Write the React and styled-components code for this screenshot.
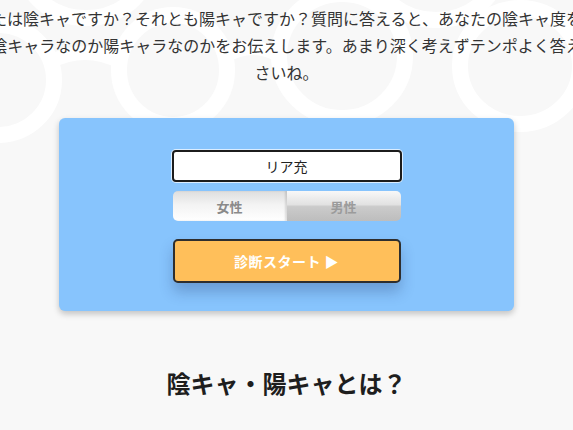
import { useState } from 'react'
import styled, { createGlobalStyle } from 'styled-components'

const GlobalStyle = createGlobalStyle`
    html, body {
        margin: 0;
        padding: 0;
        background: #f8f8f8;
        overflow-x: hidden;
    }
    body {
        font-family: "Noto Sans CJK JP", "Noto Sans", sans-serif;
        color: #333;
    }
`

const Page = styled.div`
    width: 100%;
    overflow: hidden;
`

const Hero = styled.header`
    position: relative;
    padding-top: 5px;
`

const Pattern = styled.svg`
    position: absolute;
    left: 0;
    top: 0;
    width: 100%;
    height: 150px;
    z-index: 0;
`

const Intro = styled.p`
    position: relative;
    z-index: 1;
    margin: 0;
    display: flex;
    flex-direction: column;
    align-items: center;
    font-size: 16px;
    line-height: 27px;
    color: #333;
`

const IntroLine = styled.span`
    white-space: nowrap;
`

const Card = styled.section`
    position: relative;
    z-index: 1;
    width: 455px;
    margin: 32px auto 0;
    padding: 32px 0 28px;
    box-sizing: border-box;
    background: #87c4fd;
    border-radius: 6px;
    box-shadow: 0 3px 6px rgba(0, 0, 0, 0.22);
    display: flex;
    flex-direction: column;
    align-items: center;
`

const NameInput = styled.input`
    width: 230px;
    height: 32px;
    box-sizing: border-box;
    border: 2px solid #1c1c1c;
    border-radius: 4px;
    background: #fff;
    text-align: center;
    font-family: inherit;
    font-size: 14px;
    color: #222;
    outline: none;
    caret-color: #111;
    box-shadow: 0 0 0 1px rgba(255, 255, 255, 0.7);
`

const Toggle = styled.div`
    display: flex;
    width: 228px;
    height: 30px;
    margin-top: 9px;
    border-radius: 5px;
    overflow: hidden;
`

const ToggleButton = styled.button`
    flex: 1;
    border: none;
    padding: 0;
    font-family: inherit;
    font-size: 13px;
    font-weight: bold;
    cursor: pointer;
    color: ${({ $active }) => ($active ? '#8a8a8a' : '#9b9b9b')};
    background: ${({ $active }) =>
        $active
            ? 'linear-gradient(to bottom, #dedede 0%, #f3f3f3 45%, #ffffff 100%)'
            : 'linear-gradient(to bottom, #f8f8f8 0%, #e2e2e2 45%, #cbcbcb 52%, #bdbdbd 100%)'};
    box-shadow: ${({ $active }) =>
        $active ? 'inset -2px 0 2px rgba(0, 0, 0, 0.12)' : 'none'};
`

const StartButton = styled.button`
    width: 228px;
    height: 44px;
    margin-top: 18px;
    box-sizing: border-box;
    border: 2px solid #2e2e2e;
    border-radius: 5px;
    background: #ffbf5a;
    color: #fff;
    font-family: inherit;
    font-size: 14px;
    font-weight: bold;
    letter-spacing: 0.5px;
    cursor: pointer;
    box-shadow: 0 9px 14px rgba(20, 40, 90, 0.25);
`

const Heading = styled.h2`
    margin: 54px 0 0;
    text-align: center;
    font-size: 24px;
    line-height: 36px;
    font-weight: bold;
    color: #1e1e1e;
`

// glasses-like lenses of the header pattern
const lenses = [
    { cx: -2, cy: 80, rx: 56, ry: 55 },
    { cx: 173, cy: 70, rx: 54, ry: 55 },
    { cx: 342, cy: 56, rx: 63, ry: 62 },
    { cx: 520, cy: 66, rx: 60, ry: 58 },
    { cx: 86, cy: -34, rx: 62, ry: 52 },
    { cx: 436, cy: -32, rx: 62, ry: 52 },
]

function App() {
    const [gender, setGender] = useState('female')

    return (
        <Page>
            <GlobalStyle />
            <Hero>
                <Pattern viewBox="0 0 573 150" preserveAspectRatio="none" aria-hidden="true">
                    {lenses.map((l, i) => (
                        <ellipse
                            key={i}
                            cx={l.cx}
                            cy={l.cy}
                            rx={l.rx}
                            ry={l.ry}
                            fill="none"
                            stroke="#ffffff"
                            strokeWidth="16"
                        />
                    ))}
                    <path d="M50 62 Q85 44 120 62" fill="none" stroke="#ffffff" strokeWidth="14" />
                    <path d="M226 56 Q252 40 280 56" fill="none" stroke="#ffffff" strokeWidth="14" />
                </Pattern>
                <Intro>
                    <IntroLine>あなたは陰キャですか？それとも陽キャですか？質問に答えると、あなたの陰キャ度を判定</IntroLine>
                    <IntroLine>陰キャラなのか陽キャラなのかをお伝えします。あまり深く考えずテンポよく答え</IntroLine>
                    <IntroLine>さいね。</IntroLine>
                </Intro>
            </Hero>

            <Card>
                <NameInput defaultValue="リア充" autoFocus />
                <Toggle>
                    <ToggleButton $active={gender === 'female'} onClick={() => setGender('female')}>
                        女性
                    </ToggleButton>
                    <ToggleButton $active={gender === 'male'} onClick={() => setGender('male')}>
                        男性
                    </ToggleButton>
                </Toggle>
                <StartButton>診断スタート ▶</StartButton>
            </Card>

            <Heading>陰キャ・陽キャとは？</Heading>
        </Page>
    )
}

export default App
